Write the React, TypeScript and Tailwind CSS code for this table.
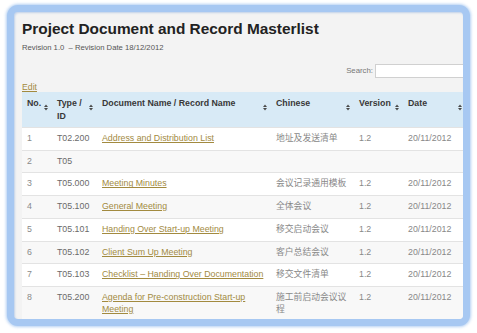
import React from 'react';

type Row = {
  no: string;
  type: string;
  name: string;
  chinese: string;
  version: string;
  date: string;
};

const rows: Row[] = [
  { no: '1', type: 'T02.200', name: 'Address and Distribution List', chinese: '地址及发送清单', version: '1.2', date: '20/11/2012' },
  { no: '2', type: 'T05', name: '', chinese: '', version: '', date: '' },
  { no: '3', type: 'T05.000', name: 'Meeting Minutes', chinese: '会议记录通用模板', version: '1.2', date: '20/11/2012' },
  { no: '4', type: 'T05.100', name: 'General Meeting', chinese: '全体会议', version: '1.2', date: '20/11/2012' },
  { no: '5', type: 'T05.101', name: 'Handing Over Start-up Meeting', chinese: '移交启动会议', version: '1.2', date: '20/11/2012' },
  { no: '6', type: 'T05.102', name: 'Client Sum Up Meeting', chinese: '客户总结会议', version: '1.2', date: '20/11/2012' },
  { no: '7', type: 'T05.103', name: 'Checklist – Handing Over Documentation', chinese: '移交文件清单', version: '1.2', date: '20/11/2012' },
  { no: '8', type: 'T05.200', name: 'Agenda for Pre-construction Start-up Meeting', chinese: '施工前启动会议议程', version: '1.2', date: '20/11/2012' },
];

function SortIcon() {
  return (
    <svg width="4" height="7" viewBox="0 0 4 7" className="absolute right-[4px] top-[12px]">
      <polygon points="0,3 2,0.5 4,3" fill="#4a4a4a" />
      <polygon points="0,4 2,6.5 4,4" fill="#4a4a4a" />
    </svg>
  );
}

const headers = [
  { label: 'No.', w: 'w-[30px]' },
  { label: 'Type / ID', w: 'w-[45px]' },
  { label: 'Document Name / Record Name', w: 'w-[174px]' },
  { label: 'Chinese', w: 'w-[83px]' },
  { label: 'Version', w: 'w-[49px]' },
  { label: 'Date', w: 'w-[63px]' },
];

export default function App() {
  return (
    <div className="w-[477px] h-[333px] bg-white font-['Liberation_Sans','Noto_Sans_CJK_SC',sans-serif] pt-[5px] pl-[7px]">
      <div className="w-[463px] h-[321px] rounded-[11px] bg-[#a7c8f2] p-[7px] shadow-[0_0_3px_1px_rgba(160,196,240,0.8)]">
        <div className="h-full rounded-[4px] bg-[#f3f3f3] overflow-hidden shadow-[inset_1px_1px_2px_rgba(120,160,220,0.4)]">
          <div className="w-[456px] pl-[8px] pt-[8px]">
            <h1 className="text-[15.4px] leading-[18px] font-bold text-[#222]">
              Project Document and Record Masterlist
            </h1>
            <p className="mt-[5px] text-[7.7px] leading-[9px] text-[#555]">
              Revision 1.0 &nbsp;– Revision Date 18/12/2012
            </p>
            <div className="mt-[12px] flex justify-end items-center h-[14px]">
              <span className="text-[7.8px] text-[#777] mr-[2px]">Search:</span>
              <div className="w-[95px] h-[14px] bg-white border border-[#d0d0d0]" />
            </div>
            <div className="mt-[1px] h-[12px] leading-[12px]">
              <a className="text-[8.7px] text-[#a28a3f] underline">Edit</a>
            </div>
            <table className="mt-[1px] w-[444px] border-collapse table-fixed text-[8.8px]">
              <thead>
                <tr className="bg-[#d8eaf6]">
                  {headers.map((h) => (
                    <th
                      key={h.label}
                      className={`${h.w} relative align-top text-left font-bold text-[#383838] leading-[13px] pt-[4.5px] pb-[4.5px] pl-[5px] pr-[10px]`}
                    >
                      {h.label}
                      <SortIcon />
                    </th>
                  ))}
                </tr>
              </thead>
              <tbody>
                {rows.map((r, i) => (
                  <tr key={r.no} className={i % 2 === 0 ? 'bg-white' : 'bg-[#f8f8f8]'}>
                    <td className="align-top border-t border-[#e3e3e3] pl-[5px] pt-[5px] pb-[5px] leading-[11.7px] text-[#8a8a8a]">{r.no}</td>
                    <td className="align-top border-t border-[#e3e3e3] pl-[5px] pt-[5px] pb-[5px] leading-[11.7px] text-[#6a6a6a]">{r.type}</td>
                    <td className="align-top border-t border-[#e3e3e3] pl-[5px] pr-[5px] pt-[5px] pb-[5px] leading-[11.7px]">
                      {r.name && <a className="text-[#a28a3f] underline">{r.name}</a>}
                    </td>
                    <td className="align-top border-t border-[#e3e3e3] pl-[5px] pr-[5px] pt-[5px] pb-[5px] leading-[11.7px] text-[#888]">{r.chinese}</td>
                    <td className="align-top border-t border-[#e3e3e3] pl-[5px] pt-[5px] pb-[5px] leading-[11.7px] text-[#888]">{r.version}</td>
                    <td className="align-top border-t border-[#e3e3e3] pl-[5px] pt-[5px] pb-[5px] leading-[11.7px] text-[#888]">{r.date}</td>
                  </tr>
                ))}
              </tbody>
            </table>
          </div>
        </div>
      </div>
    </div>
  );
}
